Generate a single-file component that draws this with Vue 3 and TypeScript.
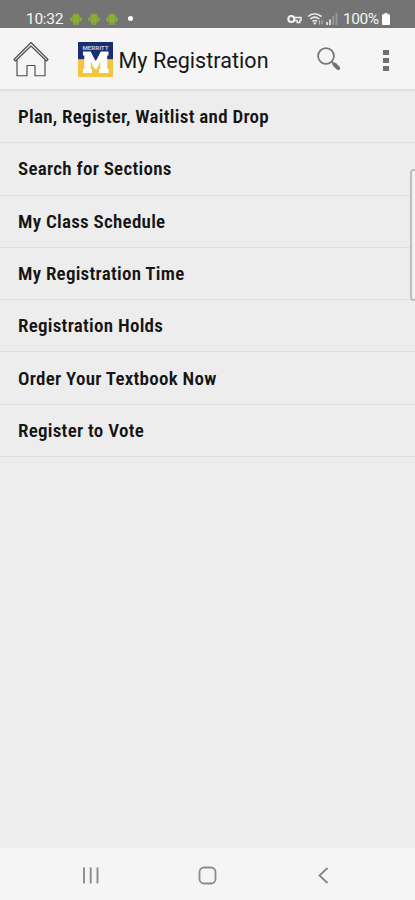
<script setup lang="ts">
interface MenuItem {
  label: string
}

const items: MenuItem[] = [
  { label: 'Plan, Register, Waitlist and Drop' },
  { label: 'Search for Sections' },
  { label: 'My Class Schedule' },
  { label: 'My Registration Time' },
  { label: 'Registration Holds' },
  { label: 'Order Your Textbook Now' },
  { label: 'Register to Vote' },
]
</script>

<template>
  <div class="screen">
    <div class="status">
      <div class="status-left">
        <span class="clock">10:32</span>
        <svg v-for="n in 3" :key="n" class="droid" viewBox="0 0 12 14">
          <path d="M3.500 1.500l1 1.500M8.500 1.500L7.500 3" stroke="#8bad35" stroke-width="1" />
          <path d="M2.300 5.500a3.700 3.700 0 0 1 7.400 0v4.500H8.500v3H6.500v-2.500h-1v2.500h-2v-3H2.300z" fill="#8bad35" />
          <path d="M1.200 6v2.800M10.800 6v2.800" stroke="#8bad35" stroke-width="1.600" stroke-linecap="round" />
        </svg>
        <span class="dot"></span>
      </div>
      <div class="status-right">
        <svg class="key" viewBox="0 0 15 10">
          <circle cx="4.300" cy="5" r="3" fill="none" stroke="#f3f3f3" stroke-width="2" />
          <path d="M7 3.500h7v3h-1.200v2h-2.700v-2H7" fill="none" stroke="#f3f3f3" stroke-width="1.300" />
        </svg>
        <svg class="wifi" viewBox="0 0 17 14">
          <path d="M1 4.500Q7.500-1 14.500 4.500M3.300 7q4.400-3.800 8.900 0M5.500 9.500q2.300-2 4.500 0" fill="none" stroke="#e8e8e8" stroke-width="1.600" />
          <path d="M6 10.500h3.500L7.800 13z" fill="#eee" />
          <path d="M12.500 8v4.500M15 8v4.500" stroke="#b8b8b8" stroke-width="1" />
        </svg>
        <svg class="signal" viewBox="0 0 12 13">
          <path d="M1 10v3M4 7.500V13" stroke="#e0e0e0" stroke-width="1.800" />
          <path d="M7.300 4v9M10.500 1v12" stroke="#989898" stroke-width="1.800" />
        </svg>
        <span class="percent">100%</span>
        <svg class="battery" viewBox="0 0 8 12">
          <path d="M2.500 0h3v1.300H7q1 0 1 1V11q0 1-1 1H1q-1 0-1-1V2.300q0-1 1-1h1.500z" fill="#fff" />
        </svg>
      </div>
    </div>

    <header class="bar">
      <svg class="home" viewBox="0 0 36 36">
        <g fill="none" stroke="#4c4c4c" stroke-width="1.150" stroke-linejoin="round">
          <path d="M1 18.500L18 1.500l17 17-1.500 1.500L18 5 2.500 20z" />
          <path d="M4 19v15.700h10V24.500h8v10.200h10V19" />
        </g>
      </svg>
      <svg class="logo" viewBox="0 0 35 35">
        <path d="M0 0h35v17.500H0z" fill="#182f72" />
        <path d="M0 17.500h35V35H0z" fill="#f3c540" />
        <path d="M5 9.500h8l4.800 9.500 4.700-9.500h8v4h-1.300v13.200h1.300V31h-9.500v-4.300h1.300V19.500L18.800 27h-2.300L12.800 19.500v7.200h1.300V31H5v-4.300h1.300V13.500H5z" fill="#fff" />
        <path d="M12.700 9.500h10L17.700 19z" fill="#182f72" />
        <text x="17.500" y="7.600" text-anchor="middle" textLength="26" lengthAdjust="spacingAndGlyphs" class="logo-word">MERRITT</text>
      </svg>
      <h1 class="title">My Registration</h1>
      <svg class="search" viewBox="0 0 26 26">
        <circle cx="10" cy="10" r="7.900" fill="none" stroke="#777" stroke-width="1.800" />
        <path d="M15.500 15.500l3 3" stroke="#777" stroke-width="1.800" />
        <path d="M18.500 18.500l3.700 3.700" stroke="#747474" stroke-width="4" stroke-linecap="round" />
      </svg>
      <div class="more"><i></i><i></i><i></i></div>
    </header>

    <main class="content">
      <ul class="list">
        <li v-for="item in items" :key="item.label" class="row">
          <span class="label">{{ item.label }}</span>
        </li>
      </ul>
      <div class="edge-handle"></div>
    </main>

    <nav class="nav">
      <svg class="nav-icon" viewBox="0 0 20 20">
        <path d="M3 1.500v16M9.700 1.500v16M16.500 1.500v16" stroke="#8b8b8b" stroke-width="1.900" />
      </svg>
      <svg class="nav-icon" viewBox="0 0 20 20">
        <rect x="1.500" y="1.500" width="16" height="16" rx="4.500" fill="none" stroke="#8b8b8b" stroke-width="1.800" />
      </svg>
      <svg class="nav-icon" viewBox="0 0 20 20">
        <path d="M13.500 2L5.500 9.500l8 7.500" fill="none" stroke="#858585" stroke-width="1.800" />
      </svg>
    </nav>
  </div>
</template>

<style>
body {
  background: #ededed;
}
</style>

<style scoped>
.screen {
  width: 415px;
  height: 900px;
  display: flex;
  flex-direction: column;
  overflow: hidden;
  background: #ededed;
  font-family: Roboto, "Liberation Sans", sans-serif;
}
.status {
  box-sizing: border-box;
  height: 28px;
  flex: none;
  display: flex;
  justify-content: space-between;
  padding: 9px 25px 0 26px;
  background: #747474;
  color: #f5f5f5;
}
.status-left,
.status-right {
  display: flex;
  align-items: center;
  height: 19px;
}
.clock {
  width: 44px;
  font-size: 15.500px;
  letter-spacing: -0.300px;
}
.droid {
  width: 12px;
  height: 14px;
  margin-right: 6px;
}
.dot {
  width: 5px;
  height: 5px;
  margin-left: 4px;
  border-radius: 50%;
  background: #fff;
}
.key {
  width: 15px;
  height: 10px;
  margin-right: 5px;
}
.wifi {
  width: 17px;
  height: 14px;
  margin-right: 2px;
}
.signal {
  width: 12px;
  height: 13px;
  margin-right: 5px;
}
.percent {
  width: 39px;
  font-size: 15.500px;
  letter-spacing: -0.500px;
  white-space: nowrap;
}
.battery {
  width: 8px;
  height: 12px;
}
.bar {
  box-sizing: border-box;
  height: 63px;
  flex: none;
  display: flex;
  align-items: center;
  padding: 0 25px 0 13px;
  background: #f5f5f5;
  border-bottom: 2px solid #e0e0e0;
}
.home {
  width: 36px;
  height: 36px;
  margin-right: 29px;
}
.logo {
  width: 35px;
  height: 35px;
  margin-top: 1px;
  margin-right: 5.500px;
}
.logo-word {
  fill: #c5cde2;
  font-size: 6px;
  font-weight: 700;
}
.title {
  width: 197.500px;
  margin: 5px 0 0;
  font-size: 21.500px;
  line-height: 26px;
  font-weight: 400;
  letter-spacing: 0.050px;
  color: #161616;
  white-space: nowrap;
}
.search {
  width: 26px;
  height: 26px;
}
.more {
  display: flex;
  flex-direction: column;
  gap: 3px;
  margin-top: 3px;
  margin-left: auto;
  margin-right: 1px;
}
.more i {
  width: 6px;
  height: 5px;
  background: #6e6e6e;
}
.content {
  flex: 1;
  position: relative;
}
.list {
  margin: 0;
  padding: 0;
  list-style: none;
}
.row {
  box-sizing: border-box;
  height: 52.300px;
  display: flex;
  align-items: center;
  padding-left: 18px;
  border-bottom: 1.500px solid #dfdfdf;
}
.label {
  font-family: Roboto, sans-serif;
  font-size: 19px;
  font-weight: 600;
  font-stretch: 75%;
  letter-spacing: 0.260px;
  color: #151515;
  white-space: nowrap;
}
.edge-handle {
  position: absolute;
  top: 78px;
  right: -6px;
  box-sizing: border-box;
  width: 11px;
  height: 132px;
  border: 2px solid #bdbdbd;
  border-radius: 4px;
  background: #f2f2f2;
}
.nav {
  height: 52px;
  flex: none;
  display: flex;
  align-items: center;
  justify-content: space-between;
  padding: 3px 81px 0;
  box-sizing: border-box;
  background: #f5f5f5;
}
.nav-icon {
  width: 20px;
  height: 20px;
}
</style>
